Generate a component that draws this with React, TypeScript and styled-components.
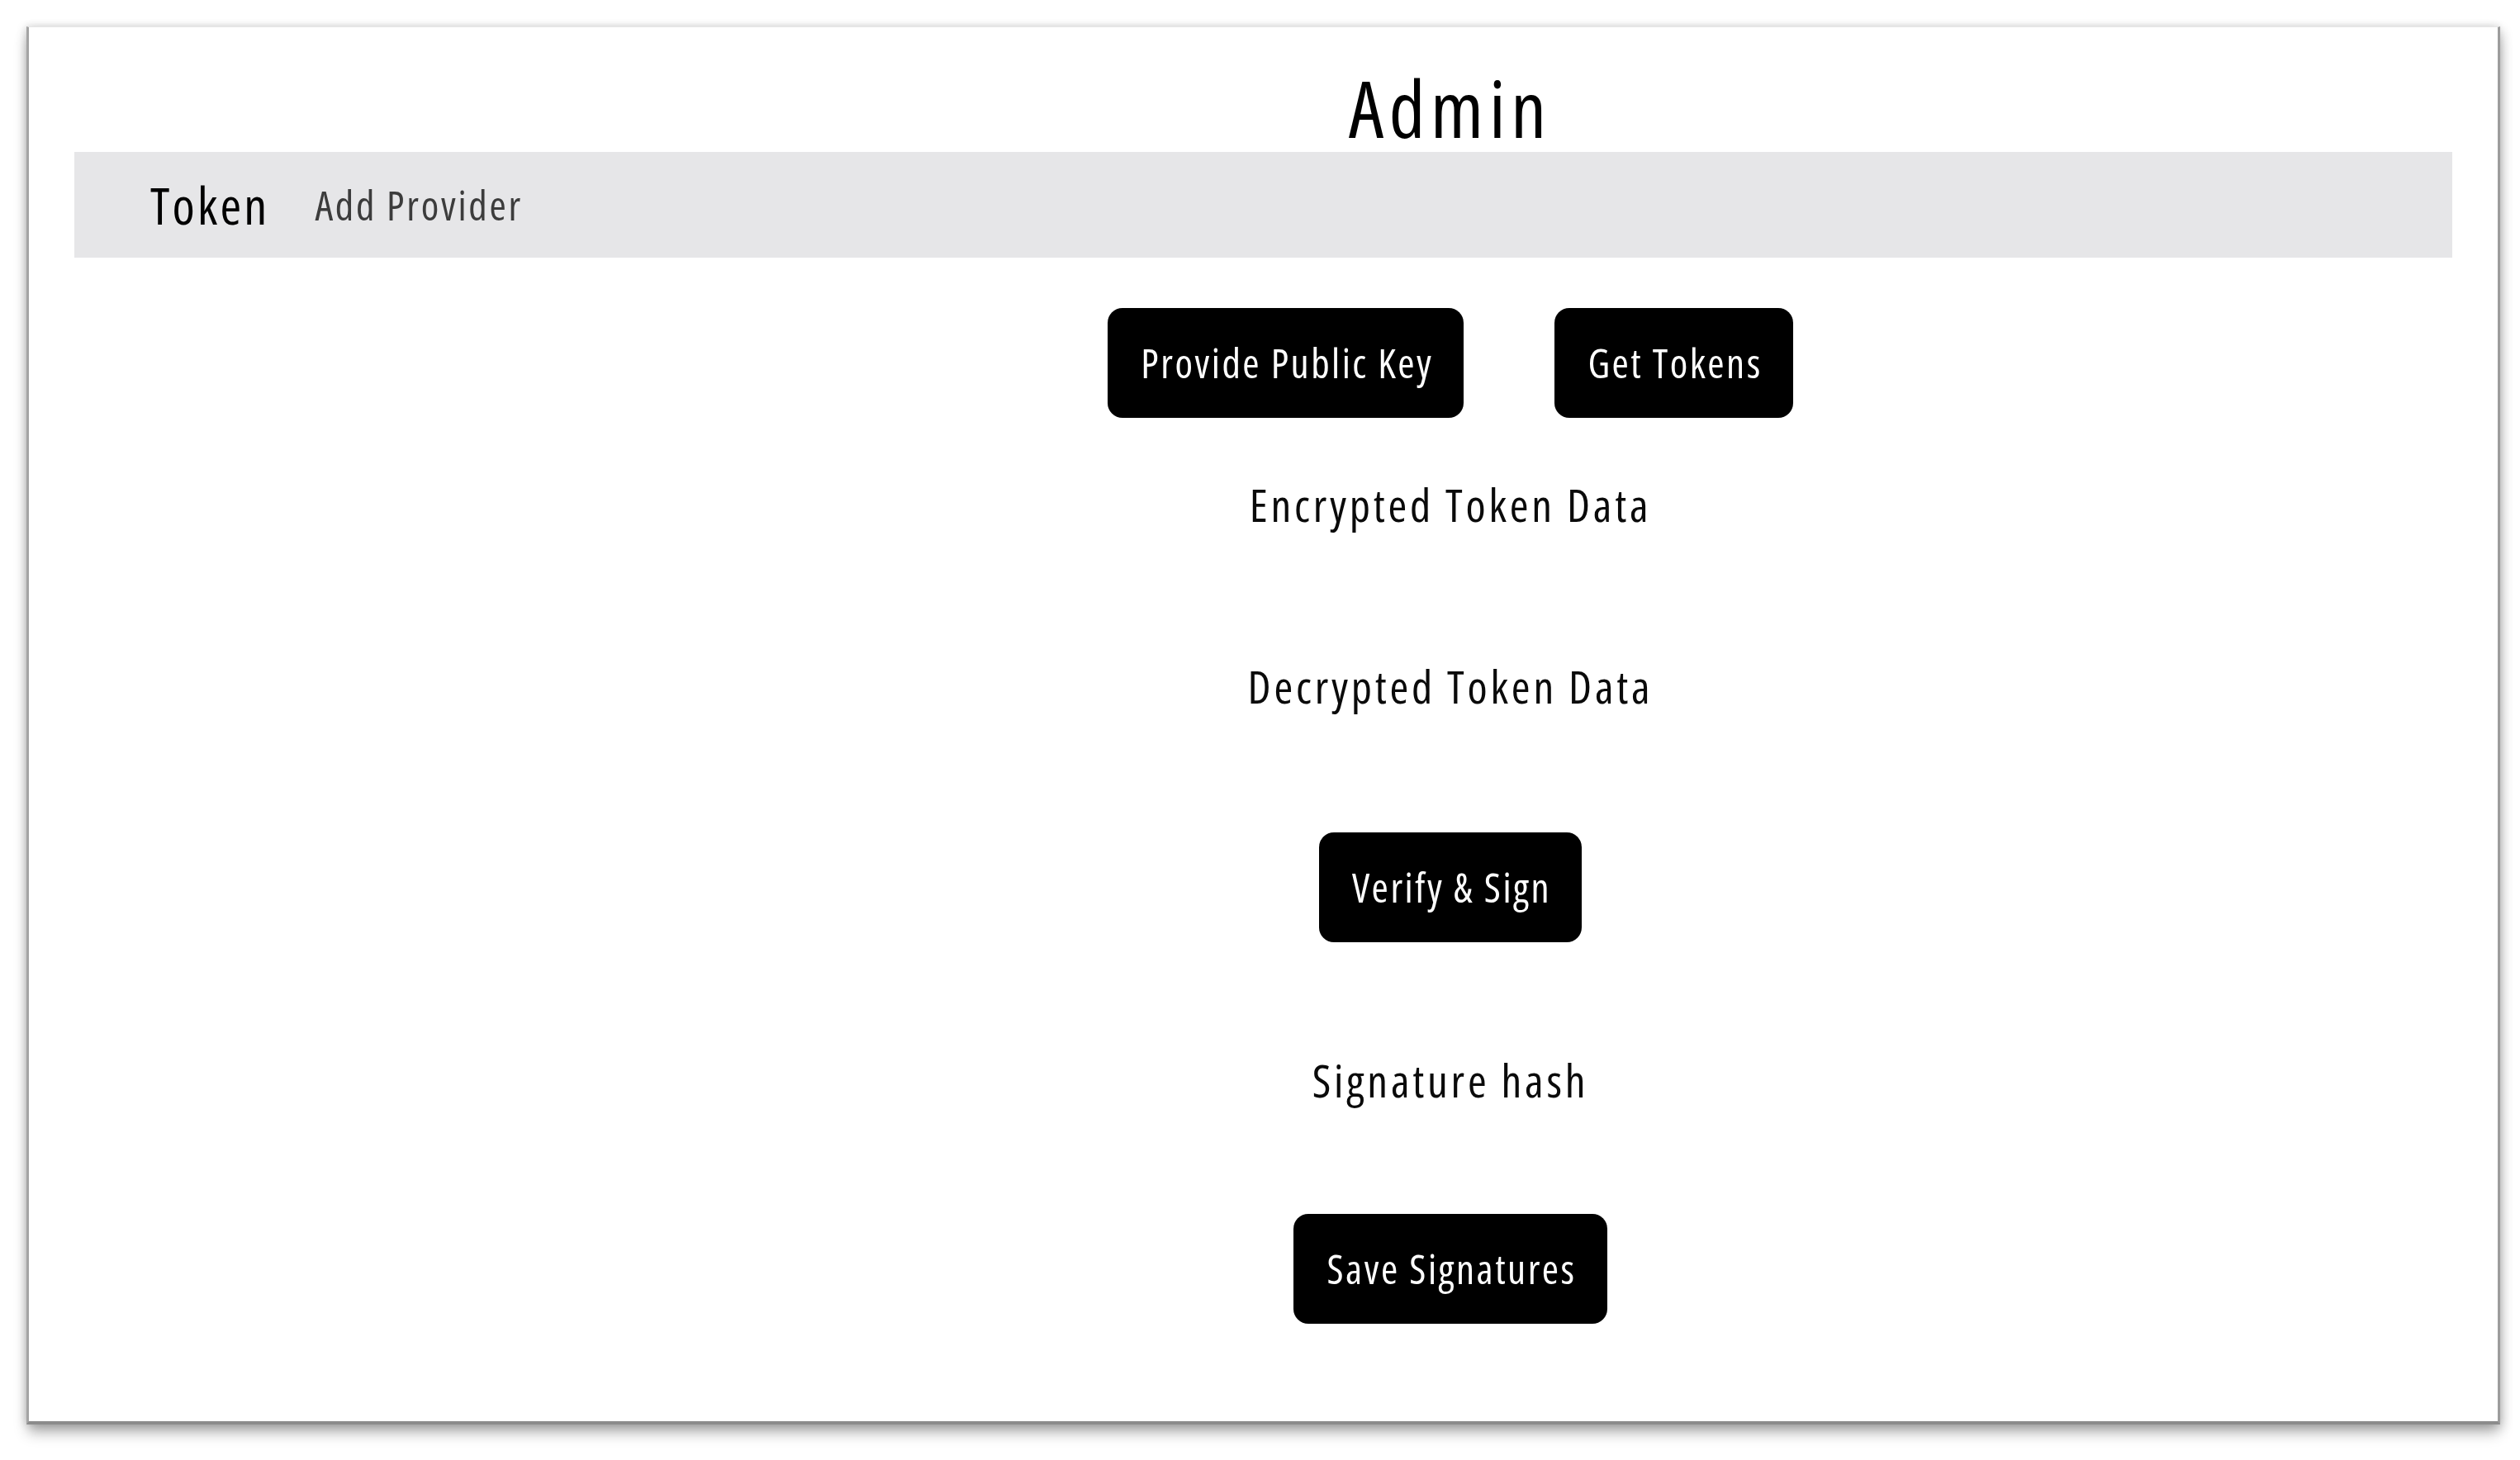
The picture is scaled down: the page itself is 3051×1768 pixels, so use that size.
import React from "react";
import styled, { createGlobalStyle } from "styled-components";

const GlobalStyle = createGlobalStyle`
  html, body { margin: 0; padding: 0; background: #ffffff; }
  body {
    font-family: "Open Sans", "Noto Sans", "Liberation Sans", sans-serif;
    font-stretch: 75%;
    color: #000;
  }
`;

const Page = styled.div`
  box-sizing: border-box;
  width: 3051px;
  height: 1768px;
  padding: 32px 24px 43px 32px;
  background: #ffffff;
`;

const Card = styled.main`
  box-sizing: border-box;
  height: 100%;
  background: #ffffff;
  border-top: 1px solid #e6e6e6;
  border-left: 3px solid #a4a4a4;
  border-right: 3px solid #9c9c9c;
  border-bottom: 4px solid #8c8c8c;
  box-shadow: 0 12px 16px -2px rgba(0, 0, 0, 0.28), 4px 4px 12px rgba(0, 0, 0, 0.12),
    -4px 0 10px rgba(0, 0, 0, 0.08), 0 -3px 8px rgba(0, 0, 0, 0.05);
  padding: 0 55px;
  display: flex;
  flex-direction: column;
`;

const Column = styled.div`
  padding-left: 453px;
  display: flex;
  flex-direction: column;
  align-items: center;
`;

const Title = styled.h1`
  margin: 50px 0 6px;
  font-size: 95px;
  font-weight: 400;
  letter-spacing: 6.8px;
  line-height: 1;
  color: #000;
`;

const NavBar = styled.nav`
  height: 128px;
  background: #e6e6e8;
  display: flex;
  align-items: center;
  padding-left: 92px;
  gap: 55px;
`;

const Brand = styled.a`
  font-size: 62px;
  letter-spacing: 3.2px;
  line-height: 1;
  color: #000;
  text-decoration: none;
`;

const NavLink = styled.a`
  font-size: 49px;
  letter-spacing: 2.75px;
  line-height: 1;
  color: #3c3c3c;
  text-decoration: none;
`;

const ButtonRow = styled.div<{ $top: number }>`
  margin-top: ${(p) => p.$top}px;
  display: flex;
  gap: 110px;
`;

const Button = styled.button<{ $top?: number }>`
  margin-top: ${(p) => p.$top ?? 0}px;
  height: 133px;
  padding: 0 37px 0 40px;
  border: none;
  border-radius: 18px;
  background: #000;
  color: #fff;
  font-family: inherit;
  font-stretch: inherit;
  font-size: 49px;
  letter-spacing: 2.5px;
  line-height: 1;
  display: inline-flex;
  align-items: center;
  cursor: pointer;
`;

const Label = styled.p<{ $top: number }>`
  margin: ${(p) => p.$top}px 0 0;
  font-size: 55px;
  letter-spacing: 3.8px;
  line-height: 1;
  color: #0a0a0a;
`;

export default function App() {
  return (
    <>
      <GlobalStyle />
      <Page>
        <Card>
          <Column>
            <Title>Admin</Title>
          </Column>
          <NavBar>
            <Brand href="#">Token</Brand>
            <NavLink href="#">Add Provider</NavLink>
          </NavBar>
          <Column>
            <ButtonRow $top={61}>
              <Button>Provide Public Key</Button>
              <Button>Get Tokens</Button>
            </ButtonRow>
            <Label $top={77}>Encrypted Token Data</Label>
            <Label $top={165}>Decrypted Token Data</Label>
            <Button $top={150}>Verify &amp; Sign</Button>
            <Label $top={139}>Signature hash</Label>
            <Button $top={135}>Save Signatures</Button>
          </Column>
        </Card>
      </Page>
    </>
  );
}
